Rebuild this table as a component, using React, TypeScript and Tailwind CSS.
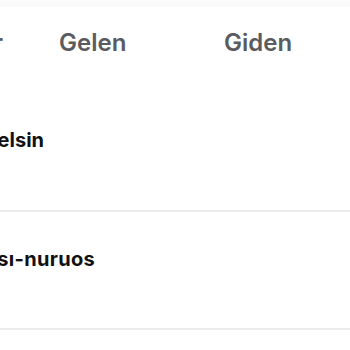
export default function App() {
  return (
    <div className="w-[350px] h-[350px] overflow-hidden bg-white font-['Inter',sans-serif]">
      <div className="h-[7px] bg-[#fafafa]" />
      <div className="flex h-[86px] pt-[20px] text-[24px] leading-[32px] font-semibold text-[#5a5a61]">
        <div className="w-[3px] flex justify-end overflow-hidden">
          <span className="whitespace-nowrap">r</span>
        </div>
        <div className="w-[165px] pl-[56px]">Gelen</div>
        <div className="w-[165px] pl-[56px]">Giden</div>
      </div>
      <div className="h-[119px] border-b-2 border-[#ededed] pt-[35px] text-[20px] leading-[24px] font-bold text-[#111111]">
        <div className="flex justify-end w-[44px] overflow-hidden">
          <span className="whitespace-nowrap">elsin</span>
        </div>
      </div>
      <div className="h-[118px] border-b-2 border-[#ededed] pt-[35px] text-[20px] leading-[24px] font-bold tracking-[0.3px] text-[#111111]">
        <div className="flex justify-end w-[95px] overflow-hidden">
          <span className="whitespace-nowrap">sı-nuruos</span>
        </div>
      </div>
    </div>
  );
}
